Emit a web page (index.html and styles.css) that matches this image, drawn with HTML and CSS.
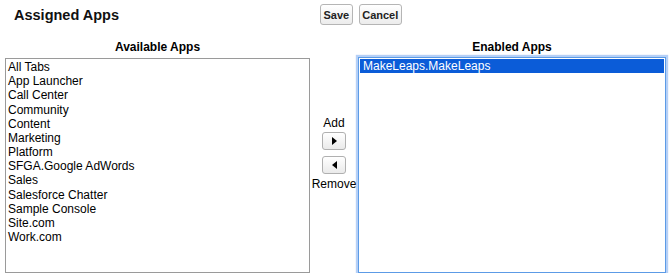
FILE: index.html
```html
<!DOCTYPE html>
<html lang="en">
<head>
    <meta charset="UTF-8">
    <title>Assigned Apps</title>
    <link rel="stylesheet" href="styles.css">
</head>
<body>
    <div class="header">
        <h2 class="title">Assigned Apps</h2>
        <button class="btn">Save</button>
        <button class="btn">Cancel</button>
    </div>
    <div class="picker">
        <div class="col col-left">
            <div class="col-title">Available Apps</div>
            <ul class="list">
                <li>All Tabs</li>
                <li>App Launcher</li>
                <li>Call Center</li>
                <li>Community</li>
                <li>Content</li>
                <li>Marketing</li>
                <li>Platform</li>
                <li>SFGA.Google AdWords</li>
                <li>Sales</li>
                <li>Salesforce Chatter</li>
                <li>Sample Console</li>
                <li>Site.com</li>
                <li>Work.com</li>
            </ul>
        </div>
        <div class="arrows">
            <span>Add</span>
            <button class="arrow-btn add">
                <svg width="5" height="8" viewBox="0 0 5 8"><polygon points="0,0 5,4 0,8" fill="#000"/></svg>
            </button>
            <button class="arrow-btn remove">
                <svg width="5" height="8" viewBox="0 0 5 8"><polygon points="5,0 0,4 5,8" fill="#000"/></svg>
            </button>
            <span class="remove-label">Remove</span>
        </div>
        <div class="col col-right">
            <div class="col-title">Enabled Apps</div>
            <ul class="list focused">
                <li class="selected">MakeLeaps.MakeLeaps</li>
            </ul>
        </div>
    </div>
</body>
</html>
```

FILE: styles.css
```css
body {
    margin: 0;
    font-family: "Liberation Sans", Arial, sans-serif;
    font-size: 12px;
    color: #000;
}
.header {
    display: flex;
    align-items: center;
    padding-top: 4px;
    height: 21px;
}
.title {
    margin: 0;
    width: 306px;
    padding-left: 14px;
    font-size: 14.5px;
    line-height: 18px;
    font-weight: bold;
    color: #111;
}
.btn {
    height: 21px;
    margin-right: 6px;
    padding: 0 2.5px;
    font-family: "Liberation Sans", Arial, sans-serif;
    font-size: 11px;
    font-weight: bold;
    color: #222;
    background: linear-gradient(#ffffff, #ececec);
    border: 1px solid #b5b5b5;
    border-radius: 3px;
}
.picker {
    display: flex;
    margin-top: 15px;
    padding-left: 5px;
}
.col-title {
    font-weight: bold;
    text-align: center;
    line-height: 14px;
    margin-bottom: 4px;
}
.col-left {
    width: 305px;
}
.col-right {
    width: 308px;
}
.list {
    list-style: none;
    margin: 0;
    padding: 0 0 0 2px;
    height: 213px;
    border: 1px solid #9a9a9a;
    line-height: 14.17px;
    box-sizing: content-box;
}
.col-left .list {
    padding-top: 1px;
    height: 212px;
}
.list.focused {
    padding: 1px;
    height: 212px;
    margin-top: -1px;
    border-color: #5c9be6;
    box-shadow: 0 0 1px 2px rgba(120, 170, 240, 0.55);
}
.list li {
    white-space: nowrap;
}
.selected {
    background: #0b5cd8;
    color: #fff;
    padding-left: 3px;
    line-height: 14px;
}
.arrows {
    width: 48px;
    display: flex;
    flex-direction: column;
    align-items: center;
    padding-top: 76px;
}
.arrows span {
    line-height: 14px;
}
.arrow-btn {
    width: 24px;
    height: 18px;
    padding: 0;
    display: flex;
    align-items: center;
    justify-content: center;
    background: linear-gradient(#ffffff, #eaeaea);
    border: 1px solid #b0b0b0;
    border-radius: 3px;
}
.add {
    margin-top: 2px;
}
.remove {
    margin-top: 6px;
}
.remove-label {
    margin-top: 3px;
}
```
